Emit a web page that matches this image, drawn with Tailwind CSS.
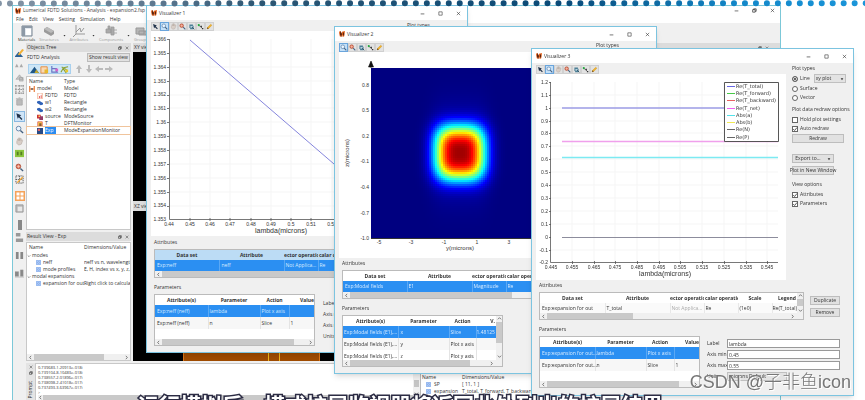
<!DOCTYPE html>
<html lang="en">
<head>
<meta charset="utf-8">
<meta name="viewport" content="width=device-width, initial-scale=1">
<title>Lumerical FDTD Solutions</title>
<script src="https://cdn.jsdelivr.net/npm/@tailwindcss/browser@4"></script>
</head>
<body class="relative h-screen overflow-hidden bg-white font-['Open_Sans','Noto_Sans',sans-serif] text-[5px] leading-[7px] text-[#333]">

<!-- Shared icons -->
<svg class="hidden" aria-hidden="true">
  <symbol id="logo" viewBox="0 0 8 8"><path d="M0 1l2-1 2 4V1l4-1-1 7-2 1-1-3-1 3-2-1z" fill="#e8641b"/><path d="M2 0l2 4-1 4-2-4zM6 1l1 3-1 3-1-3z" fill="#5b2410"/></symbol>
  <symbol id="arrow" viewBox="0 0 10 10"><path d="M1.500 1.500l5.500 2-1.700 1.300 3 3-1.100 1.100-3-3L3 7.500z" fill="#20324a"/></symbol>
  <symbol id="zoom" viewBox="0 0 10 10"><circle cx="4" cy="4" r="2.600" fill="#eaf5ff" stroke="#5b7fa6" stroke-width="1"/><path d="M6 6l3 3" stroke="#44607f" stroke-width="1.500"/></symbol>
  <symbol id="hand" viewBox="0 0 10 10"><path d="M2 5l1-3 1 2V1h1v3l1-3 1 1-.5 2L8 3l.5 1-1.500 4-3 1L2 7z" fill="#d9cfc8" stroke="#a79b92" stroke-width=".5"/></symbol>
  <symbol id="target" viewBox="0 0 10 10"><circle cx="3.800" cy="3.800" r="2.600" fill="#e2725a" stroke="#a5482f" stroke-width=".8"/><path d="M2 3.800h3.600M3.800 2v3.600" stroke="#fbd9c8" stroke-width=".7"/><path d="M6 6l3 3" stroke="#44607f" stroke-width="1.500"/></symbol>
  <symbol id="copy" viewBox="0 0 10 10"><path d="M2 2h5v2h1v5H3V7H2z" fill="#4c7f96"/><path d="M3.500 4.500h3v2h-3z" fill="#cfe6ee"/><path d="M6 6l3 3" stroke="#25465a" stroke-width="1.200"/></symbol>
  <symbol id="nodes" viewBox="0 0 10 10"><path d="M2 3l3 2 3 3" stroke="#444" fill="none"/><circle cx="2.500" cy="3" r="1.500" fill="#1faa3c"/><path d="M5 4h2v2H5zM7 7h2v2H7z" fill="#333"/></symbol>
  <symbol id="pencil" viewBox="0 0 10 10"><path d="M1.500 8.500l.8-2.300 4.500-4.500 1.600 1.500-4.500 4.600z" fill="#f3b32a" stroke="#c08514" stroke-width=".5"/><path d="M1.500 8.500l.8-2.300 1.600 1.600z" fill="#55402a"/></symbol>
  <symbol id="grid" viewBox="0 0 8 8"><path d="M.5.5h3v3h-3zM4.500.5h3v3h-3zM.5 4.500h3v3h-3zM4.500 4.500h3v3h-3z" fill="#cfe1fb" stroke="#5d93e6" stroke-width=".9"/></symbol>
  <symbol id="min" viewBox="0 0 6 6"><path d="M.8 3.500h4.400" stroke="#333" stroke-width=".8"/></symbol>
  <symbol id="max" viewBox="0 0 6 6"><path d="M1 1h4v4H1z" fill="none" stroke="#333" stroke-width=".7"/></symbol>
  <symbol id="restore" viewBox="0 0 6 6"><path d="M.8 2h3v3h-3zM2 2V1h3v3H4" fill="none" stroke="#222" stroke-width=".8"/></symbol>
  <symbol id="close" viewBox="0 0 6 6"><path d="M1 1l4 4M5 1L1 5" stroke="#333" stroke-width=".7"/></symbol>
  <symbol id="tick" viewBox="0 0 6 6"><path d="M1.200 3l1.400 1.500L5 1.500" fill="none" stroke="#333" stroke-width=".8"/></symbol>
  <symbol id="down" viewBox="0 0 6 6"><path d="M1 2h4L3 4.800z" fill="#333"/></symbol>
  <symbol id="cl" viewBox="0 0 6 6"><path d="M3.800 1L2 3l1.800 2" fill="none" stroke="#444" stroke-width=".8"/></symbol>
  <symbol id="cr" viewBox="0 0 6 6"><path d="M2.200 1L4 3 2.200 5" fill="none" stroke="#444" stroke-width=".8"/></symbol>
  <symbol id="cu" viewBox="0 0 6 6"><path d="M1 4l2-2 2 2" fill="none" stroke="#444" stroke-width=".8"/></symbol>
  <symbol id="cd" viewBox="0 0 6 6"><path d="M1 2l2 2 2-2" fill="none" stroke="#444" stroke-width=".8"/></symbol>
</svg>

<!-- Main application window -->
<main class="absolute left-[12px] top-[5px] bottom-0 w-[769px] flex flex-col overflow-hidden border border-b-0 border-[#7cc8d8] bg-[#f0f0f0]">
  <header class="h-[9px] flex shrink-0 items-center bg-white pl-[2px] pr-[5px]">
    <svg class="size-[6px] mr-[2px]"><use href="#logo"/></svg>
    <h1 class="flex-1 whitespace-nowrap text-[#444]">Lumerical FDTD Solutions - Analysis - expansion2.fsp [C:/U</h1>
    <div class="flex gap-[13px]">
      <button aria-label="Minimize"><svg class="size-[5px]"><use href="#min"/></svg></button>
      <button aria-label="Restore"><svg class="size-[5px]"><use href="#restore"/></svg></button>
      <button aria-label="Close"><svg class="size-[5px]"><use href="#close"/></svg></button>
    </div>
  </header>
  <nav class="h-[8px] flex shrink-0 items-center gap-[5px] bg-white pl-[3px]">
    <button>File</button><button>Edit</button><button>View</button><button>Setting</button><button>Simulation</button><button>Help</button>
  </nav>
  <div class="h-[20px] flex shrink-0 items-end gap-[4px] pl-[5px] pb-[1px] text-[#999] text-[4px] leading-[5px]">
    <button class="flex flex-col items-center text-[#333]"><svg class="size-[12px]" viewBox="0 0 12 12"><path d="M1 1h10v10H1z" fill="#e4e9ef" stroke="#76838f"/><path d="M1 1h10v2H1zM1 1h3v10H1z" fill="#8d99a6"/><path d="M5 4h5v6H5z" fill="#fff"/></svg>Materials</button>
    <button class="flex flex-col items-center"><svg class="size-[12px]" viewBox="0 0 12 12"><path d="M1 4l3-2 7 4v3l-3 2-7-4z" fill="#9a9a9a"/><path d="M1 4l3-2 7 4-3 2z" fill="#bbb"/></svg>Structures</button>
    <svg class="size-[3px] mb-[5px]"><use href="#down"/></svg>
    <button class="flex flex-col items-center"><svg class="size-[12px]" viewBox="0 0 12 12"><path d="M3 0v9h9M3 9L0 12M3 7l4-4 1 4 3-4" fill="none" stroke="#999"/></svg>Attributes</button>
    <svg class="size-[3px] mb-[5px]"><use href="#down"/></svg>
    <button class="flex flex-col items-center"><svg class="size-[12px]" viewBox="0 0 12 12"><path d="M1 4h5v4H1zM6 2h3v8H6zM3 1h2v3H3zM9 5h3M9 8h3" fill="#aaa" stroke="#999" stroke-width=".8"/></svg>Components</button>
    <svg class="size-[3px] mb-[5px]"><use href="#down"/></svg>
    <button class="flex flex-col items-center"><svg class="size-[12px]" viewBox="0 0 12 12"><path d="M1 3h8v6H1zM4 6h8v4H4z" fill="#b5b5b5" stroke="#999"/></svg>Groups</button>
  </div>

  <div class="flex flex-1 min-h-0">
    <!-- Tool strip -->
    <div class="w-[13px] flex flex-col items-center gap-[3px] pt-[6px]">
      <svg class="size-[9px] shrink-0" viewBox="0 0 10 10"><path d="M0 8l4-5 5 6H0z" fill="#2c6295"/><path d="M3 6l5-6 2 1-5 6z" fill="#f2b033"/></svg>
      <svg class="size-[9px] shrink-0" viewBox="0 0 10 10"><path d="M0 7l2-4 2 4zM5 7l2-4 2 4z" fill="#aaa"/></svg>
      <svg class="size-[9px] shrink-0" viewBox="0 0 10 10"><path d="M1 7l4-5 4 5zM5 5h4v4H5z" fill="#c5c5c5" stroke="#999" stroke-width=".6"/></svg>
      <svg class="size-[9px] shrink-0" viewBox="0 0 10 10"><path d="M1 0v10M5 0v10M9 0v10M0 1h10M0 5h10M0 9h10" stroke="#999" stroke-width="1.300" stroke-dasharray="2 1"/></svg>
      <svg class="size-[9px] shrink-0" viewBox="0 0 10 10"><path d="M1 2h8M4 1h2M2 3h6v6H2z" fill="#bbb" stroke="#aaa"/></svg>
      <button aria-label="Select" class="mt-[2px] shrink-0 border border-[#8ab8e0] bg-[#cfe5f8]"><svg class="size-[9px]"><use href="#arrow"/></svg></button>
      <svg class="size-[9px] shrink-0"><use href="#zoom"/></svg>
      <svg class="size-[9px] shrink-0"><use href="#hand"/></svg>
      <svg class="size-[9px] shrink-0" viewBox="0 0 10 10"><path d="M0 1h10v8H0z" fill="#8cc63f"/><path d="M2 3h2v4H2zM6 3h2v4H6z" fill="#557f22"/></svg>
      <svg class="mt-[2px] size-[9px] shrink-0"><use href="#target"/></svg>
      <svg class="size-[9px] shrink-0" viewBox="0 0 10 10"><path d="M1 1h8v8H1zM5 1v8M1 5h8" fill="none" stroke="#555" stroke-dasharray="1.500 1"/><path d="M2 8l6-6 1 1-6 6z" fill="#f2a52c"/></svg>
      <svg class="mt-[4px] size-[10px] shrink-0" viewBox="0 0 10 10"><path d="M0 0h10v10H0z" fill="#f5a35a"/><path d="M1.500 1.500h3v3h-3zM5.500 1.500h3v3h-3zM1.500 5.500h3v3h-3zM5.500 5.500h3v3h-3z" fill="#fff"/></svg>
      <svg class="size-[9px] shrink-0" viewBox="0 0 10 10"><path d="M1 1h8v8H1z" fill="#bbb" stroke="#999"/><path d="M3 3h5v5H3z" fill="#e8e8e8"/></svg>
      <svg class="mt-[4px] size-[10px] shrink-0" viewBox="0 0 10 10"><path d="M3 0h4v10H3z" fill="#888"/></svg>
      <svg class="size-[9px] shrink-0" viewBox="0 0 10 10"><path d="M1 0h5v4H1zM1 6h8v4H1z" fill="#999"/></svg>
      <svg class="mt-[6px] size-[9px] shrink-0" viewBox="0 0 10 10"><path d="M1 1h3v8H1zM6 1h3v8H6z" fill="#888"/></svg>
      <svg class="mt-[6px] size-[9px] shrink-0" viewBox="0 0 10 10"><path d="M0 3h4v5H0zM6 1h3v7H6zM0 9h10" fill="#888" stroke="#999" stroke-width=".6"/></svg>
    </div>

    <div class="flex flex-1 min-w-0 flex-col">
      <div class="flex h-[318px] shrink-0">
        <!-- Docked panels -->
        <div class="flex w-[105px] flex-col">
          <div class="flex h-[9px] items-center justify-between bg-[#dcdcdc] px-[1px]"><h2>Objects Tree</h2><span class="flex gap-[3px] pr-px"><svg class="size-[4px]"><use href="#restore"/></svg><svg class="size-[4px]"><use href="#close"/></svg></span></div>
          <div class="flex h-[11px] items-center justify-between px-[1px]"><span>FDTD Analysis</span><button class="h-[9px] border border-[#bbb] bg-[#e1e1e1] px-[1px] leading-[7px]">Show result view</button></div>
          <div class="flex h-[12px] items-center pl-[2px]">
            <span class="flex h-[10px] items-center gap-[1px] border border-[#a8d0ee] bg-[#cde6f7] px-[1px]">
              <svg class="size-[9px]" viewBox="0 0 10 10"><path d="M0 9l5-7 5 7z" fill="#1f5687"/><path d="M5 9l2-4 3 4z" fill="#c4a82d"/></svg>
              <svg class="size-[9px]" viewBox="0 0 10 10"><path d="M1 2h7v7H1z" fill="#f8d9b5" stroke="#e88a3a"/><path d="M5 5h4v4H5z" fill="#e8b82c"/></svg>
              <svg class="size-[9px]" viewBox="0 0 10 10"><path d="M2 1v7h7M2 4h5v4" fill="none" stroke="#6a74c4" stroke-width="1.300"/><path d="M6 4h3v3H6z" fill="#d965c8"/></svg>
              <svg class="size-[9px]" viewBox="0 0 10 10"><path d="M1 8l3-5 4 3M4 3l5-1M2 2l5 7" fill="none" stroke="#8ba032" stroke-width="1.200"/><path d="M6 5h3v3H6z" fill="#e8c82c"/></svg>
            </span>
            <span class="flex gap-[2px] pl-[4px]">
              <svg class="size-[8px]" viewBox="0 0 8 8"><path d="M4 0l3 4H5v4H3V4H1z" fill="#bbb"/></svg>
              <svg class="size-[8px]" viewBox="0 0 8 8"><path d="M4 8L1 4h2V0h2v4h2z" fill="#bbb"/></svg>
              <svg class="size-[8px]" viewBox="0 0 8 8"><path d="M0 4l4-3v2h4v2H4v2z" fill="#bbb"/></svg>
              <svg class="size-[8px]" viewBox="0 0 8 8"><path d="M8 4L4 1v2H0v2h4v2z" fill="#bbb"/></svg>
            </span>
          </div>
          <div class="mt-[1px] h-[154px] border border-[#c8c8c8] bg-white">
            <table class="w-full table-fixed border-collapse whitespace-nowrap">
              <thead><tr class="h-[8px] text-left"><th class="w-[37px] p-0 pl-[2px] font-normal">Name</th><th class="p-0 font-normal">Type</th></tr></thead>
              <tbody>
                <tr><td class="p-0"><span class="flex items-center gap-[2px] pl-[2px]"><svg class="size-[6px]" viewBox="0 0 8 8"><path d="M1 0v8M7 0v8M1 4h6" stroke="#e8742c" stroke-width="1.500"/><path d="M3 3h2v2H3z" fill="#345"/></svg>model</span></td><td class="p-0">Model</td></tr>
                <tr><td class="p-0"><span class="flex items-center gap-[2px] pl-[10px]"><svg class="size-[6px]" viewBox="0 0 8 8"><path d="M1 0h6v8H1z" fill="#fff" stroke="#eda27c"/><path d="M3 4h1v3H3zM5 3h1v4H5z" fill="#d33"/></svg>FDTD</span></td><td class="p-0">FDTD</td></tr>
                <tr><td class="p-0"><span class="flex items-center gap-[2px] pl-[10px]"><svg class="size-[6px]" viewBox="0 0 8 8"><path d="M0 2l3-1 5 3v2L5 7 0 4z" fill="#2f62b8"/></svg>w1</span></td><td class="p-0">Rectangle</td></tr>
                <tr><td class="p-0"><span class="flex items-center gap-[2px] pl-[10px]"><svg class="size-[6px]" viewBox="0 0 8 8"><path d="M0 2l3-1 5 3v2L5 7 0 4z" fill="#2f62b8"/></svg>w2</span></td><td class="p-0">Rectangle</td></tr>
                <tr><td class="p-0"><span class="flex items-center gap-[2px] pl-[10px]"><svg class="size-[6px]" viewBox="0 0 8 8"><path d="M0 1h5v5H0z" fill="#c33"/><path d="M3 3h5v5H3z" fill="#933a66"/><path d="M2 2h2v2H2z" fill="#fc6"/></svg>source</span></td><td class="p-0">ModeSource</td></tr>
                <tr><td class="p-0"><span class="flex items-center gap-[2px] pl-[10px]"><svg class="size-[6px]" viewBox="0 0 8 8"><path d="M1 1h6v6H1z" fill="#fbd24a" stroke="#d55"/><path d="M3 3h3v4H3z" fill="#853"/></svg>T</span></td><td class="p-0">DFTMonitor</td></tr>
                <tr class="outline outline-[#f0c49c]"><td class="p-0"><span class="flex items-center gap-[2px] pl-[10px]"><svg class="size-[6px]" viewBox="0 0 8 8"><path d="M0 0h8v8H0z" fill="#274a86"/><path d="M1 1h3v3H1z" fill="#d66"/></svg><span class="w-[11px] bg-[#2b8cf0] text-white">Exp</span></span></td><td class="p-0">ModeExpansionMonitor</td></tr>
              </tbody>
            </table>
          </div>
          <div class="mt-[2px] flex h-[9px] items-center justify-between bg-[#dcdcdc] px-[1px]"><h2>Result View - Exp</h2><span class="flex gap-[3px] pr-px"><svg class="size-[4px]"><use href="#restore"/></svg><svg class="size-[4px]"><use href="#close"/></svg></span></div>
          <div class="mt-[1px] flex flex-1 flex-col border border-[#c8c8c8] bg-white">
            <table class="w-full table-fixed border-collapse whitespace-nowrap">
              <thead><tr class="h-[9px] text-left"><th class="w-[57px] p-0 pl-[2px] font-normal">Name</th><th class="p-0 font-normal">Dimensions/Value</th></tr></thead>
              <tbody>
                <tr><td class="p-0"><span class="flex items-center gap-[1px]"><svg class="size-[4px] shrink-0"><use href="#cd"/></svg>modes</span></td><td></td></tr>
                <tr><td class="p-0"><span class="flex items-center gap-[2px] pl-[9px]"><svg class="size-[5px] shrink-0"><use href="#grid"/></svg>neff</span></td><td class="overflow-hidden p-0">neff vs n, wavelength</td></tr>
                <tr><td class="p-0"><span class="flex items-center gap-[2px] pl-[9px]"><svg class="size-[5px] shrink-0"><use href="#grid"/></svg>mode profiles</span></td><td class="overflow-hidden p-0">E, H, index vs x, y, z, w</td></tr>
                <tr><td class="p-0"><span class="flex items-center gap-[1px]"><svg class="size-[4px] shrink-0"><use href="#cd"/></svg>modal expansions</span></td><td></td></tr>
                <tr><td class="p-0"><span class="flex items-center gap-[2px] pl-[9px]"><svg class="size-[5px] shrink-0"><use href="#grid"/></svg>expansion for out</span></td><td class="overflow-hidden p-0">Right click to calculate</td></tr>
              </tbody>
            </table>
            <div class="mt-auto flex h-[6px] items-center bg-[#f0f0f0] px-[1px]"><svg class="size-[5px]"><use href="#cl"/></svg><span class="ml-[1px] h-full w-[70px] bg-[#c9c9c9]"></span><svg class="ml-auto size-[5px]"><use href="#cr"/></svg></div>
          </div>
        </div>
        <!-- Layout views -->
        <div class="ml-[2px] flex flex-1 flex-col">
          <div class="flex h-[9px] items-center justify-between bg-[#dcdcdc] px-px"><h2>XY view</h2><span class="flex gap-[3px] pr-[10px]"><svg class="size-[4px]"><use href="#restore"/></svg><svg class="size-[4px]"><use href="#close"/></svg></span></div>
          <div class="h-[149px] bg-black"></div>
          <div class="flex h-[10px] items-center bg-[#dcdcdc] px-px"><h2>XZ view</h2></div>
          <div class="flex flex-1 items-end bg-black pl-[50px]"><div class="flex h-[100px] w-[137px] border-x border-[#e07818] bg-[#a04c00] pl-[84px]"><span class="w-[12px] border-x border-[#f0b818]"></span></div></div>
        </div>
      </div>
      <!-- Script prompt and results -->
      <div class="mt-[2px] flex min-h-0 flex-1 bg-white">
        <div class="flex w-[9px] flex-col items-center gap-[2px] bg-[#e4e4e4] pt-[2px]"><svg class="size-[4px] shrink-0"><use href="#close"/></svg><svg class="size-[4px] shrink-0"><use href="#restore"/></svg><span class="mt-[4px] whitespace-nowrap [writing-mode:vertical-rl] rotate-180">t Prompt</span></div>
        <div class="flex flex-1 flex-col border-t border-l border-[#c8c8c8] pl-[2px] pt-px text-[4px] leading-[5px]">
          <p>0.739683-1.20913e-018i</p><p>0.739104-8.10483e-018i</p><p>0.738557-2.01896e-017i</p><p>0.738098-2.41018e-017i</p><p>0.737493-3.63967e-017i</p><p>&gt;</p>
          <div class="flex h-[5px] items-center bg-[#f0f0f0]"><svg class="size-[5px]"><use href="#cl"/></svg><span class="h-full flex-1 bg-[#c9c9c9]"></span></div>
        </div>
        <div class="flex w-[7px] flex-col items-center bg-[#f0f0f0] pt-[17px]"><span class="h-[7px] w-[5px] bg-[#c4c4c4]"></span><svg class="mt-[4px] size-[5px]"><use href="#cd"/></svg></div>
        <div class="w-[360px] border-l border-[#bbb] pt-[10px] pl-[1px]">
          <table class="table-fixed border-collapse whitespace-nowrap">
            <thead><tr class="h-[8px] text-left"><th class="w-[40px] p-0 font-normal">Name</th><th class="p-0 font-normal">Dimensions/Value</th></tr></thead>
            <tbody>
              <tr><td class="p-0"><span class="flex items-center gap-[3px] pl-[4px]"><svg class="size-[5px]"><use href="#grid"/></svg>SP</span></td><td class="p-0">[ 11, 1 ]</td></tr>
              <tr><td class="p-0"><span class="flex items-center gap-[3px] pl-[4px]"><svg class="size-[5px]"><use href="#grid"/></svg>expansion</span></td><td class="p-0">T_total, T_forward, T_backward, T_net</td></tr>
            </tbody>
          </table>
        </div>
      </div>
    </div>
  </div>
</main>

<!-- Visualizer 1 -->
<section class="absolute left-[146px] top-[5px] flex h-[348px] w-[322px] flex-col border border-[#7cc4e0] bg-[#f0f0f0] shadow-md">
  <header class="flex h-[14px] shrink-0 items-center gap-[2px] bg-white px-[4px]">
    <svg class="size-[6px]"><use href="#logo"/></svg><h2 class="flex-1">Visualizer 1</h2>
    <button aria-label="Minimize"><svg class="mr-[11px] size-[5px]"><use href="#min"/></svg></button><button aria-label="Maximize"><svg class="mr-[11px] size-[5px]"><use href="#max"/></svg></button><button aria-label="Close"><svg class="mr-[2px] size-[5px]"><use href="#close"/></svg></button>
  </header>
  <div class="flex justify-between pl-[4px]">
    <div>
      <div class="flex h-[11px] items-end">
        <button aria-label="Pointer" class="border border-[#d0d0d0] bg-[#e2e2e2]"><svg class="size-[7px]"><use href="#arrow"/></svg></button><button aria-label="Zoom" class="border border-[#6aa5dc] bg-[#c4e0f8]"><svg class="size-[7px]"><use href="#zoom"/></svg></button><button aria-label="Pan" class="border border-[#d0d0d0] bg-[#e2e2e2]"><svg class="size-[7px]"><use href="#hand"/></svg></button><button aria-label="Zoom extent" class="border border-[#d0d0d0] bg-[#e2e2e2]"><svg class="size-[7px]"><use href="#target"/></svg></button><button aria-label="Copy" class="border border-[#d0d0d0] bg-[#e2e2e2]"><svg class="size-[7px]"><use href="#copy"/></svg></button><button aria-label="Data points" class="border border-[#d0d0d0] bg-[#e2e2e2]"><svg class="size-[7px]"><use href="#nodes"/></svg></button><button aria-label="Edit" class="border border-[#d0d0d0] bg-[#e2e2e2]"><svg class="size-[7px]"><use href="#pencil"/></svg></button>
      </div>
      <svg class="h-[205px] w-[250px] bg-white font-['Liberation_Sans',sans-serif] text-[5px]" viewBox="151 31 250 205" fill="#333">
        <path d="M190 39v180M210 39v180M230 39v180M251 39v180M271 39v180M291 39v180M311 39v180M332 39v180M169 53h220M169 67h220M169 81h220M169 95h220M169 108h220M169 122h220M169 136h220M169 150h220M169 164h220M169 178h220M169 192h220M169 206h220" stroke="#f5f5f5"/>
        <path d="M169.500 39v180.500H390M167 39.500h2M167 53.500h2M167 67.500h2M167 81.500h2M167 95.500h2M167 108.500h2M167 122.500h2M167 136.500h2M167 150.500h2M167 164.500h2M167 178.500h2M167 192.500h2M167 206.500h2M190 218v3M210 218v3M230 218v3M251 218v3M271 218v3M291 218v3M311 218v3" stroke="#555" fill="none" stroke-width=".8"/>
        <path d="M190 40L334 164" stroke="#8585dc" stroke-width="1"/>
        <g text-anchor="end"><text x="166" y="41">1.366</text><text x="166" y="55">1.365</text><text x="166" y="69">1.364</text><text x="166" y="83">1.363</text><text x="166" y="96">1.362</text><text x="166" y="110">1.361</text><text x="166" y="124">1.36</text><text x="166" y="138">1.359</text><text x="166" y="152">1.358</text><text x="166" y="166">1.357</text><text x="166" y="180">1.356</text><text x="166" y="194">1.355</text><text x="166" y="207">1.354</text><text x="166" y="221">1.353</text></g>
        <g text-anchor="middle"><text x="169" y="226">0.44</text><text x="190" y="226">0.45</text><text x="210" y="226">0.46</text><text x="230" y="226">0.47</text><text x="251" y="226">0.48</text><text x="271" y="226">0.49</text><text x="291" y="226">0.5</text><text x="311" y="226">0.51</text><text x="332" y="226">0.52</text><text x="281" y="233" class="text-[7px]">lambda(microns)</text></g>
      </svg>
    </div>
    <div class="w-[60px] pt-[2px]">Plot types</div>
  </div>
  <div class="px-[7px] pt-[3px]">
    <h3>Attributes</h3>
    <div class="mt-[3px] border border-[#bbb] bg-white">
      <table class="w-[308px] table-fixed border-collapse whitespace-nowrap">
        <thead><tr class="h-[10px] bg-[#bcdcf5]"><th class="w-[64px] p-0">Data set</th><th class="w-[65px] p-0">Attribute</th><th class="w-[34px] overflow-hidden p-0">ector operatic</th><th class="w-[34px] overflow-hidden p-0 pl-[1px]">calar operatio</th><th class="p-0">Scale</th></tr></thead>
        <tbody><tr class="h-[11px] bg-[#2b8ff2] text-[#d8ebff]"><td class="p-0 pl-[2px]">Exp:neff</td><td class="border-l border-[#5aa8f5] p-0 pl-[2px]">neff</td><td class="border-l border-[#5aa8f5] p-0 pl-[1px]">Not Applica...</td><td class="border-l border-[#5aa8f5] p-0 pl-[1px]">Re</td><td></td></tr></tbody>
      </table>
      <div class="flex h-[6px] items-center bg-[#f0f0f0] pl-[1px]"><svg class="size-[5px]"><use href="#cl"/></svg><span class="ml-px h-full w-[200px] bg-[#c9c9c9]"></span></div>
    </div>
    <h3 class="mt-[6px]">Parameters</h3>
    <div class="mt-[3px] flex gap-[8px]">
      <div class="flex h-[52px] w-[161px] flex-col border border-[#bbb] bg-white">
        <table class="w-full table-fixed border-collapse whitespace-nowrap">
          <thead><tr class="h-[10px]"><th class="w-[53px] p-0">Attribute(s)</th><th class="w-[52px] p-0">Parameter</th><th class="w-[29px] p-0">Action</th><th class="overflow-hidden p-0 text-right">Value</th></tr></thead>
          <tbody>
            <tr class="h-[12px] bg-[#2b8ff2] text-[#d8ebff]"><td class="p-0 pl-[2px]">Exp:neff (neff)</td><td class="border-l border-[#5aa8f5] p-0 pl-[1px]">lambda</td><td class="border-l border-[#5aa8f5] p-0 pl-[1px]">Plot x axis</td><td class="border-l border-[#5aa8f5] p-0"></td></tr>
            <tr class="h-[12px] bg-[#f7f7f7]"><td class="p-0 pl-[2px]">Exp:neff (neff)</td><td class="border-l border-[#e4e4e4] p-0 pl-[1px]">n</td><td class="border-l border-[#e4e4e4] p-0 pl-[1px]">Slice</td><td class="border-l border-[#e4e4e4] p-0 pl-[1px]">1</td></tr>
          </tbody>
        </table>
        <div class="mt-auto flex h-[6px] items-center bg-[#f0f0f0] px-[1px]"><svg class="size-[5px]"><use href="#cl"/></svg><span class="ml-px h-full w-[132px] bg-[#c9c9c9]"></span><svg class="ml-auto size-[5px]"><use href="#cr"/></svg></div>
      </div>
      <div class="flex flex-col gap-[4px] pt-[6px] whitespace-nowrap"><span>Label</span><span>Axis min</span><span>Axis max</span><span>Units</span></div>
    </div>
  </div>
</section>

<!-- Visualizer 2 -->
<section class="absolute left-[334px] top-[26px] flex h-[348px] w-[323px] flex-col border border-[#7cc4e0] bg-[#f0f0f0] shadow-md">
  <header class="flex h-[14px] shrink-0 items-center gap-[2px] bg-white px-[4px]">
    <svg class="size-[6px]"><use href="#logo"/></svg><h2 class="flex-1">Visualizer 2</h2>
    <button aria-label="Minimize"><svg class="mr-[11px] size-[5px]"><use href="#min"/></svg></button><button aria-label="Maximize"><svg class="mr-[11px] size-[5px]"><use href="#max"/></svg></button><button aria-label="Close"><svg class="mr-[2px] size-[5px]"><use href="#close"/></svg></button>
  </header>
  <div class="flex justify-between pl-[4px]">
    <div>
      <div class="flex h-[11px] items-end">
        <button aria-label="Zoom" class="border border-[#6aa5dc] bg-[#c4e0f8]"><svg class="size-[7px]"><use href="#zoom"/></svg></button><button aria-label="Zoom extent" class="border border-[#d0d0d0] bg-[#e2e2e2]"><svg class="size-[7px]"><use href="#target"/></svg></button><button aria-label="Copy" class="border border-[#d0d0d0] bg-[#e2e2e2]"><svg class="size-[7px]"><use href="#copy"/></svg></button><button aria-label="Data points" class="border border-[#d0d0d0] bg-[#e2e2e2]"><svg class="size-[7px]"><use href="#nodes"/></svg></button><button aria-label="Edit" class="border border-[#d0d0d0] bg-[#e2e2e2]"><svg class="size-[7px]"><use href="#pencil"/></svg></button>
      </div>
      <div class="grid h-[206px] w-[250px] grid-cols-[32px_1fr] grid-rows-[16px_170px_1fr] bg-white">
        <svg class="col-span-2 h-[16px] w-full" viewBox="339 52 250 16"><path d="M371 61l-2.500 6h5zM371 62v6" fill="#111" stroke="#111" stroke-width=".6"/></svg>
        <svg class="h-[170px] w-[32px] overflow-visible font-['Liberation_Sans',sans-serif] text-[5px]" viewBox="339 68 32 170" fill="#333"><g text-anchor="end"><text x="369" y="87">0.8</text><text x="369" y="112">0.5</text><text x="369" y="138">0.2</text><text x="369" y="163">-0.1</text><text x="369" y="189">-0.4</text><text x="369" y="215">-0.7</text><text x="369" y="240">-1.0</text></g><text class="text-[6px]" text-anchor="middle" transform="translate(349 153) rotate(-90)">z(microns)</text></svg>
        <canvas id="field" width="178" height="170" class="h-[170px] w-[178px]"></canvas>
        <svg class="col-span-2 h-[20px] w-full font-['Liberation_Sans',sans-serif] text-[5px]" viewBox="339 238 250 20" fill="#333" text-anchor="middle"><path d="M371 238.500h178" stroke="#333"/><text x="379" y="244">-5</text><text x="411" y="244">-3</text><text x="444" y="244">-1</text><text x="477" y="244">1</text><text x="509" y="244">3</text><text x="460" y="250" class="text-[6px]">y(microns)</text></svg>
      </div>
    </div>
    <div class="w-[60px] pt-[1px]">Plot types</div>
  </div>
  <div class="px-[7px] pt-[2px]">
    <h3>Attributes</h3>
    <div class="mt-[3px] border border-[#bbb] bg-white">
      <table class="w-[307px] table-fixed border-collapse whitespace-nowrap">
        <thead><tr class="h-[10px]"><th class="w-[64px] p-0">Data set</th><th class="w-[65px] p-0">Attribute</th><th class="w-[34px] overflow-hidden p-0">ector operatic</th><th class="w-[34px] overflow-hidden p-0 pl-[1px]">calar operatio</th><th class="p-0">Scale</th></tr></thead>
        <tbody><tr class="h-[11px] bg-[#2b8ff2] text-[#d8ebff]"><td class="p-0 pl-[2px]">Exp:Modal fields</td><td class="border-l border-[#5aa8f5] p-0 pl-[1px]">E1</td><td class="border-l border-[#5aa8f5] p-0 pl-[1px]">Magnitude</td><td class="border-l border-[#5aa8f5] p-0 pl-[1px]">Re</td><td></td></tr></tbody>
      </table>
      <div class="flex h-[6px] items-center bg-[#f0f0f0] pl-[1px]"><svg class="size-[5px]"><use href="#cl"/></svg><span class="ml-px h-full w-[162px] bg-[#c9c9c9]"></span></div>
    </div>
    <h3 class="mt-[6px]">Parameters</h3>
    <div class="mt-[3px] flex h-[52px] w-[161px] flex-col border border-[#bbb] bg-white">
      <div class="flex min-h-0 flex-1 overflow-hidden">
        <table class="w-[153px] table-fixed border-collapse self-start whitespace-nowrap">
          <thead><tr class="h-[10px]"><th class="w-[55px] p-0">Attribute(s)</th><th class="w-[51px] p-0">Parameter</th><th class="w-[27px] p-0">Action</th><th class="overflow-hidden p-0 pr-px text-right">V.</th></tr></thead>
          <tbody>
            <tr class="h-[12px] bg-[#2b8ff2] text-[#d8ebff]"><td class="p-0 pl-px">Exp:Modal fields (E1),...</td><td class="border-l border-[#5aa8f5] p-0 pl-[2px]">x</td><td class="border-l border-[#5aa8f5] p-0 pl-[1px]">Slice</td><td class="border-l border-[#5aa8f5] p-0">1.48125</td></tr>
            <tr class="h-[12px] bg-[#f7f7f7]"><td class="p-0 pl-px">Exp:Modal fields (E1),...</td><td class="border-l border-[#e4e4e4] p-0 pl-[2px]">y</td><td class="border-l border-[#e4e4e4] p-0 pl-[1px]">Plot x axis</td><td class="border-l border-[#e4e4e4] p-0"></td></tr>
            <tr class="h-[12px]"><td class="p-0 pl-px">Exp:Modal fields (E1),...</td><td class="border-l border-[#e4e4e4] p-0 pl-[2px]">z</td><td class="border-l border-[#e4e4e4] p-0 pl-[1px]">Plot y axis</td><td class="border-l border-[#e4e4e4] p-0"></td></tr>
          </tbody>
        </table>
        <div class="flex w-[6px] flex-col items-center bg-[#f0f0f0]"><svg class="size-[5px] shrink-0"><use href="#cu"/></svg><span class="mt-px h-[21px] w-full bg-[#c9c9c9]"></span><svg class="mt-auto mb-px size-[5px] shrink-0"><use href="#cd"/></svg></div>
      </div>
      <div class="flex h-[6px] shrink-0 items-center bg-[#f0f0f0] px-[1px]"><svg class="size-[5px]"><use href="#cl"/></svg><span class="ml-px h-full w-[120px] bg-[#c9c9c9]"></span><svg class="mr-[7px] ml-auto size-[5px]"><use href="#cr"/></svg></div>
    </div>
  </div>
</section>

<!-- Visualizer 3 -->
<section class="absolute left-[531px] top-[48px] flex h-[348px] w-[323px] flex-col border border-[#7cc4e0] bg-[#f0f0f0] shadow-md">
  <header class="flex h-[14px] shrink-0 items-center gap-[2px] bg-white px-[4px]">
    <svg class="size-[6px]"><use href="#logo"/></svg><h2 class="flex-1">Visualizer 3</h2>
    <button aria-label="Minimize"><svg class="mr-[11px] size-[5px]"><use href="#min"/></svg></button><button aria-label="Maximize"><svg class="mr-[11px] size-[5px]"><use href="#max"/></svg></button><button aria-label="Close"><svg class="mr-[2px] size-[5px]"><use href="#close"/></svg></button>
  </header>
  <div class="flex gap-[5px] pl-[4px]">
    <div>
      <div class="flex h-[11px] items-end">
        <button aria-label="Pointer" class="border border-[#d0d0d0] bg-[#e2e2e2]"><svg class="size-[7px]"><use href="#arrow"/></svg></button><button aria-label="Zoom" class="border border-[#6aa5dc] bg-[#c4e0f8]"><svg class="size-[7px]"><use href="#zoom"/></svg></button><button aria-label="Pan" class="border border-[#d0d0d0] bg-[#e2e2e2]"><svg class="size-[7px]"><use href="#hand"/></svg></button><button aria-label="Zoom extent" class="border border-[#d0d0d0] bg-[#e2e2e2]"><svg class="size-[7px]"><use href="#target"/></svg></button><button aria-label="Copy" class="border border-[#d0d0d0] bg-[#e2e2e2]"><svg class="size-[7px]"><use href="#copy"/></svg></button><button aria-label="Data points" class="border border-[#d0d0d0] bg-[#e2e2e2]"><svg class="size-[7px]"><use href="#nodes"/></svg></button><button aria-label="Edit" class="border border-[#d0d0d0] bg-[#e2e2e2]"><svg class="size-[7px]"><use href="#pencil"/></svg></button>
      </div>
      <svg class="h-[206px] w-[250px] bg-white font-['Liberation_Sans',sans-serif] text-[5px]" viewBox="536 74 250 206" fill="#333">
        <path d="M572 82v180M594 82v180M615 82v180M637 82v180M659 82v180M680 82v180M702 82v180M724 82v180M746 82v180M767 82v180M551 95h227M551 108h227M551 121h227M551 133h227M551 146h227M551 159h227M551 172h227M551 185h227M551 198h227M551 211h227M551 224h227M551 250h227" stroke="#f5f5f5"/>
        <path d="M550.500 82v180.500H778M549 82.500h2M549 95.500h2M549 108.500h2M549 121.500h2M549 133.500h2M549 146.500h2M549 159.500h2M549 172.500h2M549 185.500h2M549 198.500h2M549 211.500h2M549 224.500h2M549 237.500h2M549 250.500h2M572.500 261v3M594.500 261v3M615.500 261v3M637.500 261v3M659.500 261v3M680.500 261v3M702.500 261v3M724.500 261v3M746.500 261v3M767.500 261v3" fill="none" stroke="#555" stroke-width=".8"/>
        <path d="M562 108h216" stroke="#9c9ce6" stroke-width="1.300"/><path d="M562 141.500h216" stroke="#f0a0ec" stroke-width="1.300"/><path d="M562 157.500h216" stroke="#7ceaf2" stroke-width="1.300"/><path d="M562 237.500h216" stroke="#8c8c9c"/>
        <path d="M724.500 82.500h54v59h-54z" fill="#fff" stroke="#444" stroke-width=".9"/>
        <g stroke-width=".9"><path d="M727 86.500h8" stroke="#5555e0"/><path d="M727 93.500h8" stroke="#33c433"/><path d="M727 100.500h8" stroke="#e65050"/><path d="M727 108.500h8" stroke="#ee50ee"/><path d="M727 115.500h8" stroke="#40dfe8"/><path d="M727 122.500h8" stroke="#f0e840"/><path d="M727 129.500h8M727 137.500h8" stroke="#555"/></g>
        <g class="font-['DejaVu_Sans',sans-serif]"><text x="736" y="88">Re(T_total)</text><text x="736" y="95">Re(T_forward)</text><text x="736" y="102">Re(T_backward)</text><text x="736" y="110">Re(T_net)</text><text x="736" y="117">Abs(a)</text><text x="736" y="124">Abs(b)</text><text x="736" y="131">Re(N)</text><text x="736" y="139">Re(P)</text></g>
        <g text-anchor="end"><text x="548" y="84">1.2</text><text x="548" y="97">1.1</text><text x="548" y="110">1</text><text x="548" y="123">0.9</text><text x="548" y="135">0.8</text><text x="548" y="148">0.7</text><text x="548" y="161">0.6</text><text x="548" y="174">0.5</text><text x="548" y="187">0.4</text><text x="548" y="200">0.3</text><text x="548" y="213">0.2</text><text x="548" y="226">0.1</text><text x="548" y="239">0</text><text x="548" y="252">-0.1</text><text x="548" y="264">-0.2</text></g>
        <g text-anchor="middle"><text x="551" y="269">0.445</text><text x="572" y="269">0.455</text><text x="594" y="269">0.465</text><text x="615" y="269">0.475</text><text x="637" y="269">0.485</text><text x="659" y="269">0.495</text><text x="680" y="269">0.505</text><text x="702" y="269">0.515</text><text x="724" y="269">0.525</text><text x="746" y="269">0.535</text><text x="767" y="269">0.545</text><text x="665" y="276" class="text-[7px]">lambda(microns)</text></g>
      </svg>
    </div>
    <aside class="flex w-[60px] flex-col pt-[2px] whitespace-nowrap">
      <fieldset class="flex min-w-0 flex-col gap-[2px] px-px">
        <legend class="mb-[2px]">Plot types</legend>
        <div class="flex items-center gap-[2px]"><input id="p1" name="plot" type="radio" checked class="size-[6px] appearance-none rounded-full border border-[#666] bg-white checked:bg-[#333] checked:shadow-[inset_0_0_0_1px_white]"><label for="p1">Line</label>
          <span class="relative ml-[2px]"><select aria-label="Plot style" class="block h-[9px] w-[32px] appearance-none border border-[#c0c0c0] bg-[#e3e3e3] pl-[1px] leading-[7px]"><option>xy plot</option></select><svg class="pointer-events-none absolute top-[3px] right-[2px] size-[4px]"><use href="#down"/></svg></span></div>
        <div class="flex items-center gap-[2px]"><input id="p2" name="plot" type="radio" class="size-[6px] appearance-none rounded-full border border-[#666] bg-white"><label for="p2">Surface</label></div>
        <div class="flex items-center gap-[2px]"><input id="p3" name="plot" type="radio" class="size-[6px] appearance-none rounded-full border border-[#666] bg-white"><label for="p3">Vector</label></div>
      </fieldset>
      <fieldset class="mt-[5px] flex min-w-0 flex-col gap-[2px] px-px">
        <legend class="mb-[3px]">Plot data redraw options</legend>
        <div class="flex items-center gap-[2px]"><input id="c1" type="checkbox" class="size-[6px] appearance-none border border-[#666] bg-white"><label for="c1">Hold plot settings</label></div>
        <div class="flex items-center gap-[2px]"><span class="grid"><input id="c2" type="checkbox" checked class="col-start-1 row-start-1 size-[6px] appearance-none border border-[#666] bg-white"><svg class="pointer-events-none col-start-1 row-start-1 size-[6px]"><use href="#tick"/></svg></span><label for="c2">Auto redraw</label></div>
        <button class="mr-[6px] h-[9px] border border-[#bdbdbd] bg-[#e1e1e1] leading-[7px]">Redraw</button>
      </fieldset>
      <button class="mt-[11px] ml-px flex h-[9px] w-[42px] items-center justify-center gap-[6px] border border-[#bdbdbd] bg-[#e1e1e1]">Export to...<svg class="size-[4px]"><use href="#down"/></svg></button>
      <button class="mt-[3px] ml-px flex h-[9px] w-[42px] items-center justify-center border border-[#bdbdbd] bg-[#e1e1e1]">Plot in New Window</button>
      <fieldset class="mt-[6px] flex min-w-0 flex-col gap-[2px] px-px">
        <legend class="mb-[3px]">View options</legend>
        <div class="flex items-center gap-[2px]"><span class="grid"><input id="c3" type="checkbox" checked class="col-start-1 row-start-1 size-[6px] appearance-none border border-[#666] bg-white"><svg class="pointer-events-none col-start-1 row-start-1 size-[6px]"><use href="#tick"/></svg></span><label for="c3">Attributes</label></div>
        <div class="flex items-center gap-[2px]"><span class="grid"><input id="c4" type="checkbox" checked class="col-start-1 row-start-1 size-[6px] appearance-none border border-[#666] bg-white"><svg class="pointer-events-none col-start-1 row-start-1 size-[6px]"><use href="#tick"/></svg></span><label for="c4">Parameters</label></div>
      </fieldset>
    </aside>
  </div>
  <div class="px-[7px] pt-[2px]">
    <h3>Attributes</h3>
    <div class="mt-[3px] flex gap-[6px]">
      <div class="w-[265px] border border-[#bbb] bg-white">
        <div class="flex">
          <table class="w-[257px] table-fixed border-collapse whitespace-nowrap">
            <thead><tr class="h-[10px]"><th class="w-[65px] p-0">Data set</th><th class="w-[65px] p-0">Attribute</th><th class="w-[34px] overflow-hidden p-0">ector operatic</th><th class="w-[34px] overflow-hidden p-0 pl-[1px]">calar operatio</th><th class="w-[34px] p-0">Scale</th><th class="overflow-hidden p-0 pr-px text-right">Legend</th></tr></thead>
            <tbody><tr class="h-[10px] bg-[#fafafa]"><td class="p-0 pl-[2px]">Exp:expansion for out</td><td class="border-l border-[#e8e8e8] p-0 pl-[1px]">T_total</td><td class="border-l border-[#e8e8e8] p-0 pl-[1px] text-[#aaa]">Not Applica...</td><td class="border-l border-[#e8e8e8] p-0 pl-[1px]">Re</td><td class="border-l border-[#e8e8e8] p-0 pl-[1px]">(1e0)</td><td class="border-l border-[#e8e8e8] p-0">Re(T_total)</td></tr></tbody>
          </table>
          <div class="flex flex-1 flex-col items-center bg-[#f0f0f0]"><svg class="size-[5px]"><use href="#cu"/></svg><span class="mt-px h-[7px] w-full bg-[#c9c9c9]"></span><svg class="mt-auto size-[5px]"><use href="#cd"/></svg></div>
        </div>
        <div class="flex h-[6px] items-center bg-[#f0f0f0] px-[1px]"><svg class="size-[5px]"><use href="#cl"/></svg><span class="ml-px h-full w-[86px] bg-[#c9c9c9]"></span><svg class="mr-[7px] ml-auto size-[5px]"><use href="#cr"/></svg></div>
      </div>
      <div class="flex w-[30px] flex-col gap-[3px] pt-[4px]"><button class="h-[9px] border border-[#bdbdbd] bg-[#e1e1e1] leading-[7px]">Duplicate</button><button class="h-[9px] border border-[#bdbdbd] bg-[#e1e1e1] leading-[7px]">Remove</button></div>
    </div>
    <h3 class="mt-[6px]">Parameters</h3>
    <div class="mt-[3px] flex gap-[7px]">
      <div class="flex h-[52px] w-[161px] flex-col border border-[#bbb] bg-white">
        <table class="w-full table-fixed border-collapse whitespace-nowrap">
          <thead><tr class="h-[10px]"><th class="w-[55px] p-0">Attribute(s)</th><th class="w-[51px] p-0">Parameter</th><th class="w-[28px] p-0">Action</th><th class="overflow-hidden p-0 text-right">Value</th></tr></thead>
          <tbody>
            <tr class="h-[12px] bg-[#2b8ff2] text-[#d8ebff]"><td class="p-0 pl-[2px]">Exp:expansion for out...</td><td class="border-l border-[#5aa8f5] p-0 pl-[1px]">lambda</td><td class="border-l border-[#5aa8f5] p-0 pl-[1px]">Plot x axis</td><td class="border-l border-[#5aa8f5] p-0"></td></tr>
            <tr class="h-[12px] bg-[#f7f7f7]"><td class="p-0 pl-[2px]">Exp:expansion for out...</td><td class="border-l border-[#e4e4e4] p-0 pl-[1px]">n</td><td class="border-l border-[#e4e4e4] p-0 pl-[1px]">Slice</td><td class="border-l border-[#e4e4e4] p-0 pl-[1px]">1</td></tr>
          </tbody>
        </table>
        <div class="mt-auto flex h-[6px] items-center bg-[#f0f0f0] px-[1px]"><svg class="size-[5px]"><use href="#cl"/></svg><span class="ml-px h-full w-[132px] bg-[#c9c9c9]"></span><svg class="ml-auto size-[5px]"><use href="#cr"/></svg></div>
      </div>
      <div class="grid w-[133px] grid-cols-[20px_1fr] content-start items-center gap-y-[2px] pt-[3px] whitespace-nowrap">
        <label for="f1">Label</label><input id="f1" value="lambda" class="h-[9px] min-w-0 border border-[#999] bg-white px-[1px]">
        <label for="f2">Axis min</label><input id="f2" value="0.45" class="h-[9px] min-w-0 border border-[#999] bg-white px-[1px]">
        <label for="f3">Axis max</label><input id="f3" value="0.55" class="h-[9px] min-w-0 border border-[#999] bg-white px-[1px]">
        <label for="f4">Units</label><select id="f4" class="h-[9px] w-[60px] appearance-none border border-[#c0c0c0] bg-[#e3e3e3] px-[1px] leading-[7px]"><option>microns Default</option></select>
      </div>
    </div>
  </div>
</section>

<!-- Row of dots along the top edge -->
<svg class="absolute inset-x-0 top-0 h-[7px] w-full" aria-hidden="true">
  <defs><linearGradient id="dots" gradientUnits="userSpaceOnUse" x1="0" y1="0" x2="865" y2="0"><stop offset="0" stop-color="#8495a6"/><stop offset=".18" stop-color="#5d7890"/><stop offset=".3" stop-color="#2c5673"/><stop offset=".65" stop-color="#094a78"/><stop offset=".85" stop-color="#1286c8"/><stop offset="1" stop-color="#1b96da"/></linearGradient></defs>
  <path d="M-1 3.400L868 3.300" stroke="url(#dots)" stroke-width="6" stroke-linecap="round" stroke-dasharray="0 10.970" fill="none"/>
</svg>

<!-- Subtitle and watermark -->
<p class="absolute top-[391px] left-[138px] text-[21px] leading-[26px] font-bold whitespace-nowrap text-white [-webkit-text-stroke:3px_#2c2c44] [paint-order:stroke_fill] font-['Noto_Sans_CJK_SC',sans-serif]" lang="zh">运行模拟后，模式扩展监视器将返回此处列出的扩展结果</p>
<p class="absolute right-[14px] bottom-[6px] text-[18px] leading-[24px] font-light whitespace-nowrap text-[#777] [text-shadow:1px_1px_0_#fff] font-['Liberation_Sans','Noto_Sans_CJK_SC',sans-serif]" lang="zh">CSDN @子非鱼icon</p>

<script>
// Draws the mode field magnitude with a jet colour map.
const canvas = document.getElementById('field');
const ctx = canvas.getContext('2d');
const clamp = v => Math.max(0, Math.min(1, v));
const jet = v => [1.5 - Math.abs(4 * v - 3), 1.5 - Math.abs(4 * v - 2), 1.5 - Math.abs(4 * v - 1)].map(c => Math.round(255 * clamp(c)));
const cell = 2;
for (let y = 0; y < canvas.height; y += cell) {
  for (let x = 0; x < canvas.width; x += cell) {
    const dx = Math.abs(x + 1 - 89), dy = Math.abs(y + 1 - 85);
    const core = Math.exp(-Math.pow(dx / 25, 3)) * Math.exp(-Math.pow(dy / 27, 3));
    const tail = 0.14 * Math.exp(-Math.pow(dx / 29, 4)) * Math.exp(-Math.pow(dy / 40, 2));
    const [r, g, b] = jet(clamp(core * 0.87 + tail * 0.7));
    ctx.fillStyle = `rgb(${r},${g},${b})`;
    ctx.fillRect(x, y, cell, cell);
  }
}
</script>
</body>
</html>
